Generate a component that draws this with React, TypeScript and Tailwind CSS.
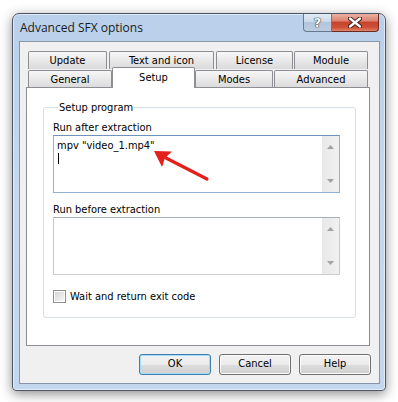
import React from "react";

// Win7 style "Advanced SFX options" dialog

const Tab = ({ label, className = "" }: { label: string; className?: string }) => (
  <div
    className={`h-[18px] shrink-0 rounded-t-[2px] border border-b-0 border-[#8c8e94] bg-gradient-to-b from-[#f7f7f7] to-[#dadada] text-center leading-[17px] ${className}`}
  >
    {label}
  </div>
);

const ScrollBar = () => (
  <div className="flex w-[17px] flex-col items-center justify-between bg-gradient-to-r from-[#e8e8e8] to-[#f1f1f1] py-[9px]">
    <svg width="7" height="4" viewBox="0 0 7 4">
      <path d="M0 4 L3.5 0 L7 4 Z" fill="#a3a3a3" />
    </svg>
    <svg width="7" height="4" viewBox="0 0 7 4">
      <path d="M0 0 L7 0 L3.5 4 Z" fill="#a3a3a3" />
    </svg>
  </div>
);

const EditBox = ({ focused, children }: { focused?: boolean; children?: React.ReactNode }) => (
  <div
    className={`flex h-[58px] w-[287px] border bg-white ${
      focused ? "border-[#8fb1d6] border-t-[#6f93bd]" : "border-[#c9ccd2] border-t-[#a9adb5]"
    }`}
  >
    <div className="flex-1 pl-[3px] pt-[3px] leading-[13px]">{children}</div>
    <ScrollBar />
  </div>
);

const Button = ({ label, primary }: { label: string; primary?: boolean }) => (
  <div
    className={`flex h-[21px] w-[72px] items-center justify-center rounded-[3px] border bg-[linear-gradient(#f3f3f3_0%,#ebebeb_50%,#dddddd_51%,#d0d0d0_100%)] ${
      primary
        ? "border-[#3c7fb1] shadow-[inset_0_0_0_1px_#a6dcf8]"
        : "border-[#707070] shadow-[inset_0_0_0_1px_#fbfbfb]"
    }`}
  >
    {label}
  </div>
);

export default function App() {
  return (
    <div className="relative h-[402px] w-[398px] overflow-hidden bg-white pt-[13px] pl-[12px] font-['DejaVu_Sans_Condensed','Liberation_Sans',sans-serif] text-[11px] text-black">
      {/* window frame */}
      <div className="flex h-[378px] w-[374px] flex-col rounded-t-[7px] rounded-b-[4px] border border-[#4b5666] bg-gradient-to-b from-[#b9d0eb] via-[#c6d9ef] to-[#c3d7ee] shadow-[0_3px_12px_rgba(0,0,0,0.45),inset_0_0_0_1px_rgba(255,255,255,0.55)]">
        {/* title bar */}
        <div className="flex h-[27px] items-start justify-between">
          <span className="ml-[7px] mt-[6px] font-['Open_Sans','Liberation_Sans',sans-serif] text-[12px] leading-[15px] text-[#1b1b1b]">
            Advanced SFX options
          </span>
          <div className="mr-[6px] flex">
            <div className="flex h-[18px] w-[29px] items-center justify-center rounded-bl-[4px] border border-t-0 border-[#6a7a8e] bg-[linear-gradient(#e4ecf5_0%,#cad8e8_45%,#b2c5db_50%,#bccde2_100%)]">
              <span className="font-['DejaVu_Sans','Liberation_Sans',sans-serif] text-[13px] font-bold leading-none text-white [text-shadow:0_0_1px_#2d3846,0_0_1px_#2d3846,0_0_1px_#2d3846]">
                ?
              </span>
            </div>
            <div className="flex h-[18px] w-[47px] items-center justify-center rounded-br-[4px] border border-l-0 border-t-0 border-[#6b2b22] bg-[linear-gradient(#eab2a4_0%,#dc826f_40%,#c8432d_50%,#cf5238_80%,#e0856a_100%)]">
              <svg width="14" height="11" viewBox="0 0 14 11">
                <path d="M2 1.5 L12 9.5 M12 1.5 L2 9.5" stroke="#3b1711" strokeWidth="4.2" strokeLinecap="round" />
                <path d="M2 1.5 L12 9.5 M12 1.5 L2 9.5" stroke="#ffffff" strokeWidth="2.4" strokeLinecap="round" />
              </svg>
            </div>
          </div>
        </div>

        {/* client area */}
        <div className="ml-[6px] flex h-[343px] w-[361px] flex-col border border-[#8795a8] bg-[#f0f0f0]">
          <div className="ml-[6px] mt-[9px] flex flex-col">
            {/* tab rows */}
            <div className="flex h-[18px]">
              <Tab label="Update" className="ml-[2px] w-[79px]" />
              <Tab label="Text and icon" className="ml-[2px] w-[105px]" />
              <Tab label="License" className="ml-[2px] w-[77px]" />
              <Tab label="Module" className="ml-[1px] w-[74px]" />
            </div>
            <div className="flex h-[18px] items-start">
              <Tab label="General" className="ml-[2px] mt-[1px] h-[17px] w-[84px]" />
              <div className="relative z-10 -mt-[2px] h-[21px] w-[83px] shrink-0 rounded-t-[2px] border border-b-0 border-[#8c8e94] bg-white pt-[2px] text-center leading-[15px]">
                Setup
              </div>
              <Tab label="Modes" className="mt-[1px] h-[17px] w-[78px]" />
              <Tab label="Advanced" className="ml-[1px] mt-[1px] h-[17px] w-[94px]" />
            </div>

            {/* tab page */}
            <div className="h-[259px] w-[344px] border border-[#8c8e94] bg-white">
              <fieldset className="ml-[16px] mt-[13px] w-[313px] rounded-[3px] border border-[#d5dfe5] pb-[14px] pl-[9px]">
                <legend className="ml-[5px] px-[1px] leading-[13px]">Setup program</legend>
                <div className="mt-[7px] leading-[13px]">Run after extraction</div>
                <div className="mt-[1px]">
                  <EditBox focused>
                    <div>mpv "video_1.mp4"</div>
                    <div className="ml-[1px] mt-[1px] h-[11px] w-[1px] bg-black" />
                  </EditBox>
                </div>
                <div className="mt-[10px] leading-[13px]">Run before extraction</div>
                <div className="mt-[1px]">
                  <EditBox />
                </div>
                <div className="mt-[15px] flex items-center gap-[4px]">
                  <div className="h-[13px] w-[13px] border border-[#8e8f8f] bg-white p-[1px]">
                    <div className="h-full w-full bg-gradient-to-br from-[#d6d6d6] to-[#f6f6f6]" />
                  </div>
                  <span className="leading-[13px]">Wait and return exit code</span>
                </div>
              </fieldset>
            </div>
          </div>

          {/* buttons */}
          <div className="mt-[8px] flex justify-end gap-[8px] pr-[8px]">
            <Button label="OK" primary />
            <Button label="Cancel" />
            <Button label="Help" />
          </div>
        </div>
      </div>

      {/* red annotation arrow */}
      <svg className="pointer-events-none absolute left-0 top-0" width="398" height="402" viewBox="0 0 398 402">
        <line x1="207" y1="179" x2="166" y2="158" stroke="#e3201b" strokeWidth="3.2" strokeLinecap="round" />
        <path d="M154 151 L172 151.5 L165 158 L162 167 Z" fill="#e3201b" />
      </svg>
    </div>
  );
}
